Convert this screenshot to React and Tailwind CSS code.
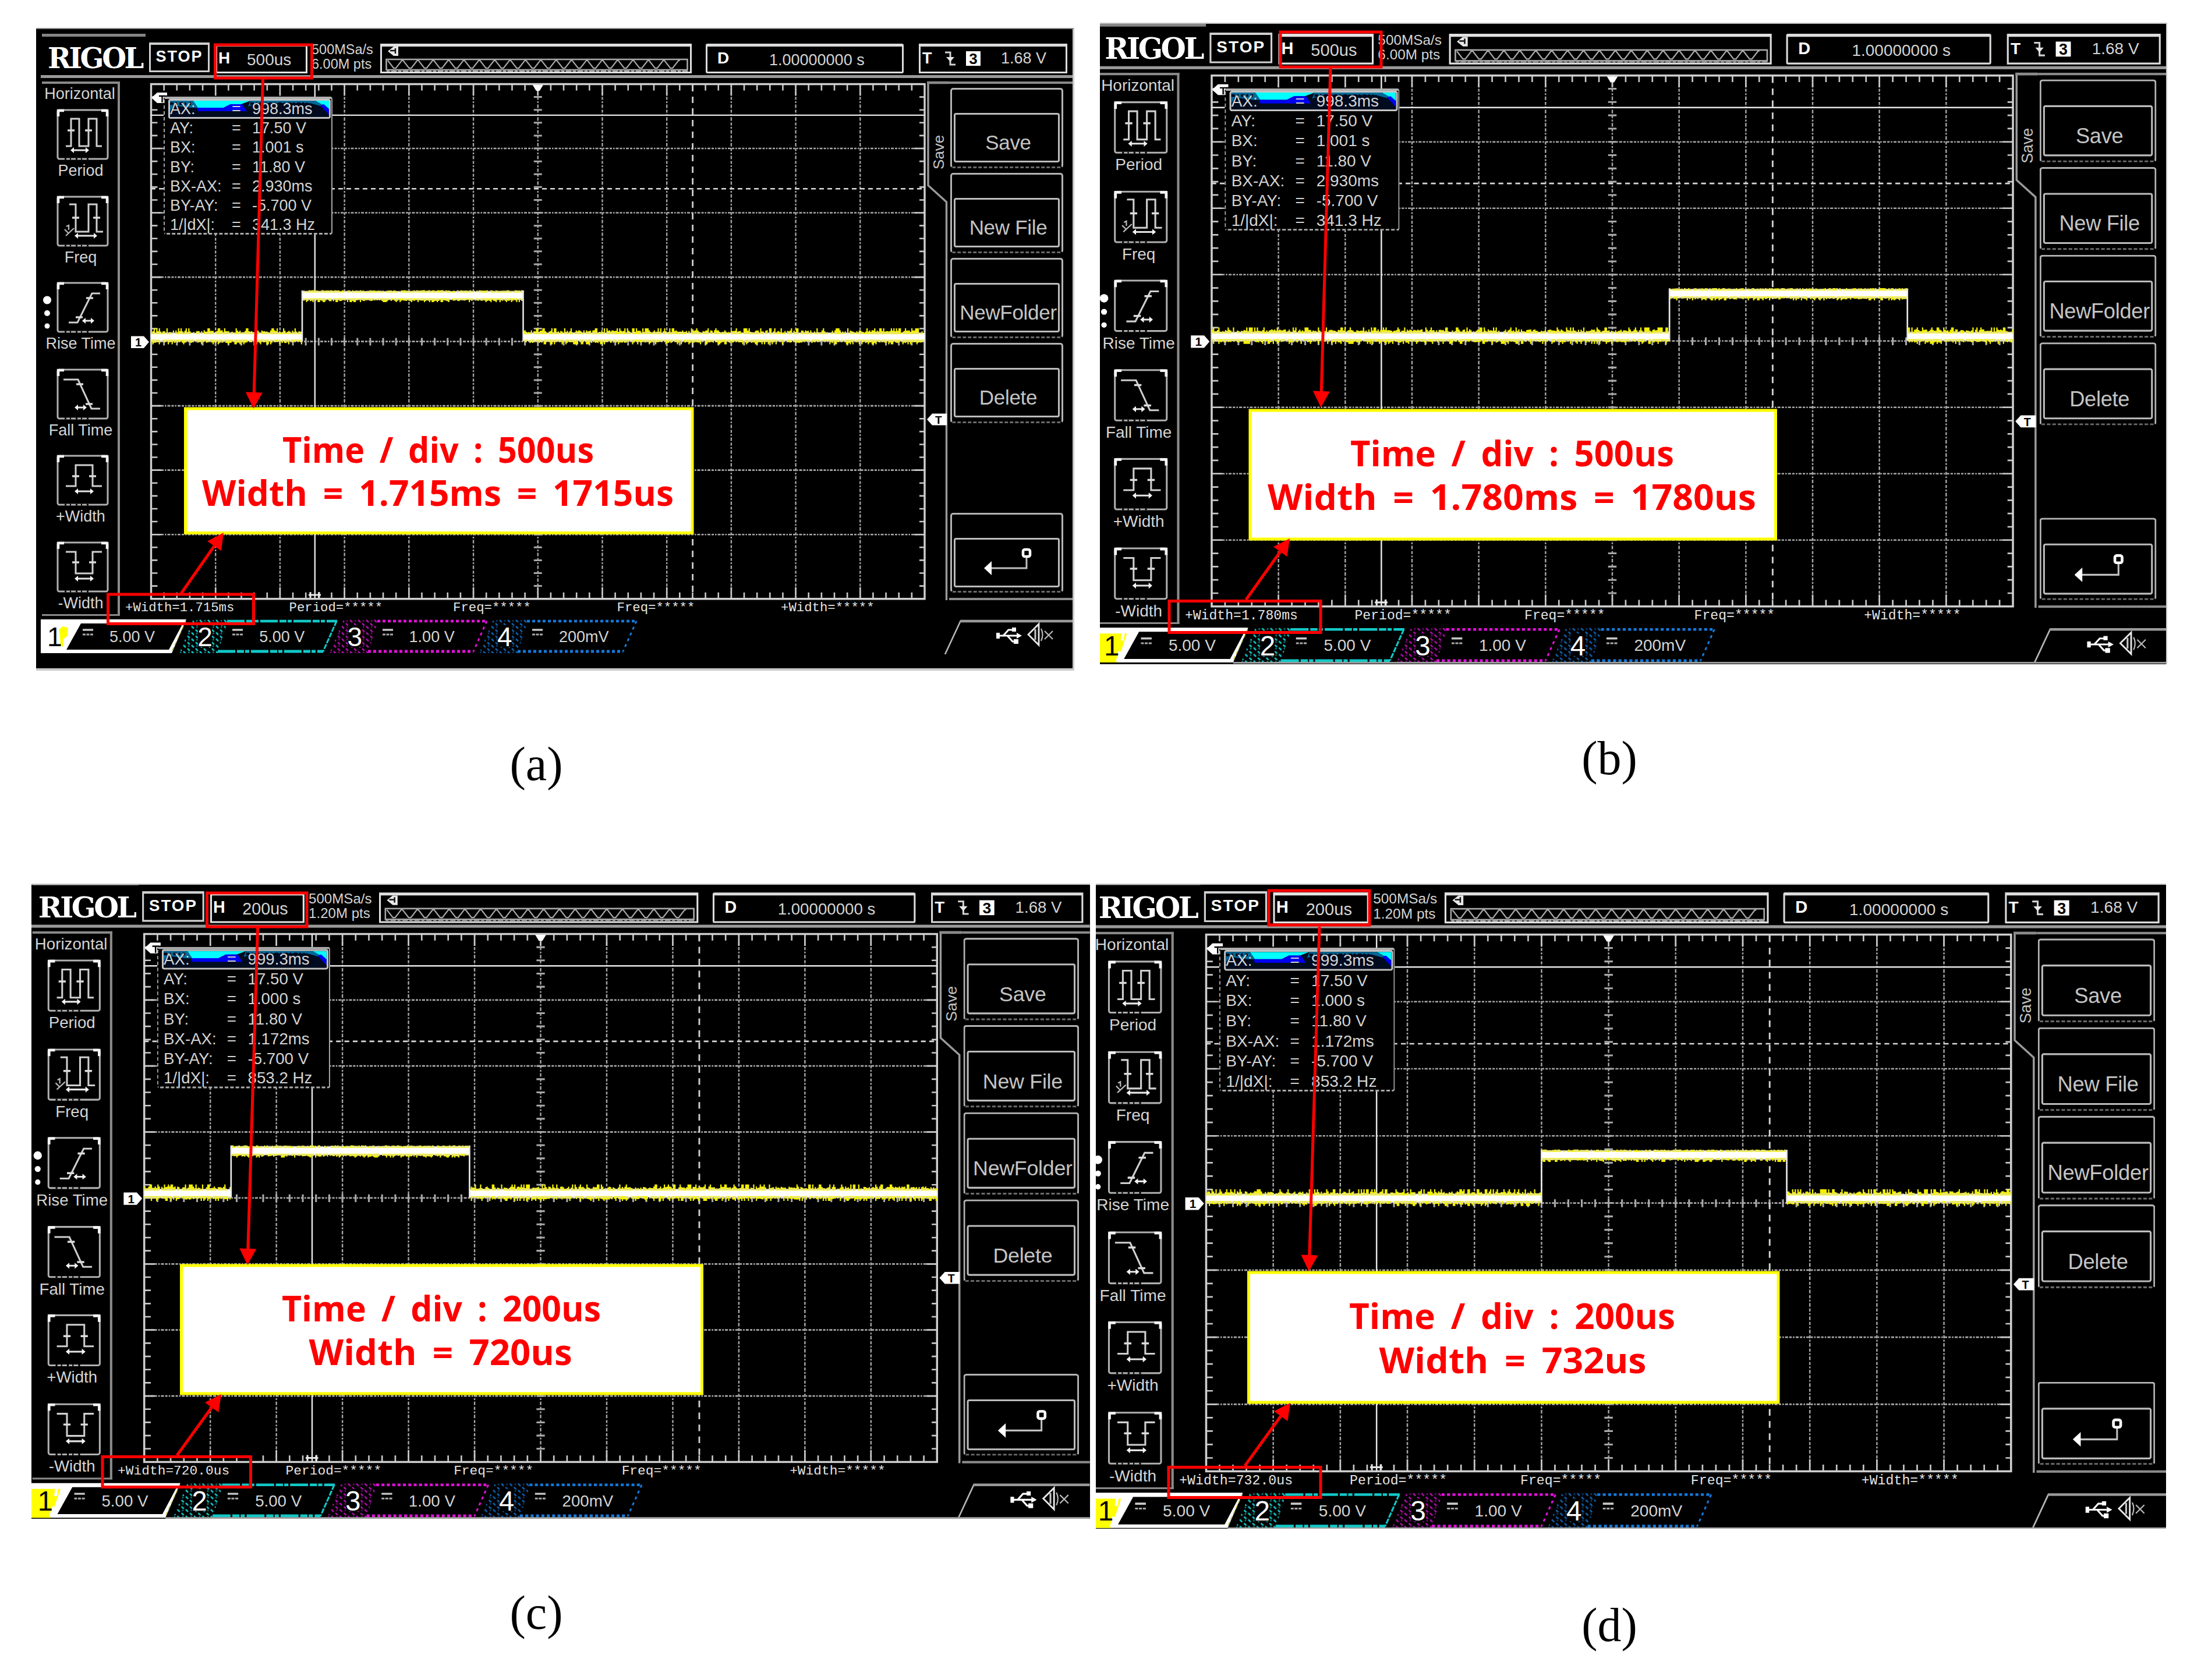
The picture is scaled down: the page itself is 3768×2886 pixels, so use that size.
const scopes = [
  {
    id: 'a',
    frame: 'ml-[62px] mt-[48px] w-[1783px] h-[1104px]',
    edge: 'border-t-2 border-t-[#8a8a8a] border-r-3 border-r-[#c8c8c8] border-b-4 border-b-[#c8c8c8]',
    caption: 'mt-[113px] pr-[3px]',
    origin: [62, 48],
    size: [1783, 1104],
    shift: [8, 8],
    scale: [1, 1],
    timebase: '500us',
    points: '6.00M pts',
    readout: ['998.3ms', '17.50 V', '1.001 s', '11.80 V', '2.930ms', '-5.700 V', '341.3 Hz'],
    measured: '1.715ms',
    pulse: [519, 898.5],
    noise: 11,
    yellowTab: false,
    notes: {
      top: [369.5, 77, 166, 57],
      topArrow: [451.5, 136, 435.5, 702],
      box: [318.5, 702, 870.5, 213.5],
      lines: [
        ['Time / div : 500us', 485, 794.6, 535],
        ['Width = 1.715ms = 1715us', 347, 868.6, 810],
      ],
      bottom: [185.5, 1021, 250, 50.5],
      bottomArrow: [311, 1019.5, 384, 915],
    },
  },
  {
    id: 'b',
    frame: 'ml-[44px] mt-[39px] w-[1833px] h-[1102px]',
    edge: 'border-t-2 border-t-[#c0c0c0] border-r-2 border-r-[#c8c8c8]',
    caption: 'mt-[114px] pr-[39px]',
    origin: [1889, 39],
    size: [1833, 1102],
    shift: [-4.3, -0.5],
    scale: [1.0358, 1.0315],
    timebase: '500us',
    points: '6.00M pts',
    readout: ['998.3ms', '17.50 V', '1.001 s', '11.80 V', '2.930ms', '-5.700 V', '341.3 Hz'],
    measured: '1.780ms',
    pulse: [1018.5, 1413],
    noise: 23,
    yellowTab: true,
    notes: {
      top: [2199, 55, 173, 60],
      topArrow: [2285, 117, 2268.5, 700],
      box: [2147, 705, 902.5, 221],
      lines: [
        ['Time / div : 500us', 2319, 800.5, 556],
        ['Width = 1.780ms = 1780us', 2177, 876.4, 839],
      ],
      bottom: [2008, 1032.5, 260, 54],
      bottomArrow: [2140, 1030, 2215, 925],
    },
  },
  {
    id: 'c',
    frame: 'ml-[54px] mt-0 w-[1818px] h-[1091px]',
    edge: 'border-t-2 border-t-[#c0c0c0]',
    caption: 'mt-[114px] pr-[30px]',
    origin: [54, 1518],
    size: [1818, 1091],
    shift: [-0.5, -4.3],
    scale: [1.0249, 1.0258],
    timebase: '200us',
    points: '1.20M pts',
    readout: ['999.3ms', '17.50 V', '1.000 s', '11.80 V', '1.172ms', '-5.700 V', '853.2 Hz'],
    measured: '720.0us',
    pulse: [405, 804.6],
    noise: 37,
    yellowTab: true,
    notes: {
      top: [355.5, 1534, 171.5, 58],
      topArrow: [442.6, 1594, 425, 2173],
      box: [311.5, 2174, 894, 220],
      lines: [
        ['Time / div : 200us', 484, 2269.5, 548],
        ['Width = 720us', 530.6, 2344.5, 452],
      ],
      bottom: [176, 2502.5, 254.5, 52],
      bottomArrow: [304, 2500, 380, 2395],
    },
  },
  {
    id: 'd',
    frame: 'ml-[10px] mt-0 w-[1838px] h-[1108px]',
    edge: 'border-t-2 border-t-[#c0c0c0]',
    caption: 'mt-[118px] pr-[64px]',
    origin: [1882, 1518],
    size: [1838, 1108],
    shift: [-7.7, -4.7],
    scale: [1.0405, 1.0428],
    timebase: '200us',
    points: '1.20M pts',
    readout: ['999.3ms', '17.50 V', '1.000 s', '11.80 V', '1.172ms', '-5.700 V', '853.2 Hz'],
    measured: '732.0us',
    pulse: [813, 1217.8],
    noise: 53,
    yellowTab: true,
    notes: {
      top: [2179, 1530, 173, 59],
      topArrow: [2266, 1592, 2248, 2184],
      box: [2144.5, 2186, 909.5, 223],
      lines: [
        ['Time / div : 200us', 2317, 2283, 560],
        ['Width = 732us', 2368.5, 2359, 459],
      ],
      bottom: [2007, 2520.5, 261, 52],
      bottomArrow: [2138, 2518, 2216, 2410],
    },
  },
];

const readoutLabels = ['AX:', 'AY:', 'BX:', 'BY:', 'BX-AX:', 'BY-AY:', '1/|dX|:'];

// Plot area in screen units
const X0 = 259.5;
const X1 = 1588;
const Y0 = 144.5;
const Y1 = 1028.7;
const DX = (X1 - X0) / 12;
const DY = (Y1 - Y0) / 8;

const sideItems = [
  { name: 'Period', d: 'M16 64H25V17H39V64H55V17H69V64H78', ticks: [[25, 37], [55, 37]], arrow: [26, 54, 71], label: 'Period' },
  { name: 'Freq', d: 'M22 15H33V62H55V15H69V62H80', ticks: [[33, 38], [69, 38]], arrow: [33, 68, 69], label: 'Freq' },
  { name: 'Rise', d: 'M21 70H36L61 20H75', ticks: [[57, 28], [39, 61]], arrow: [46, 63, 67], label: 'Rise Time' },
  { name: 'Fall', d: 'M12 19H37L60 69H75', ticks: [[40, 27], [56, 61]], arrow: [33, 50, 67], label: 'Fall Time' },
  { name: 'Width', d: 'M16 54H33V18H62V54H78', ticks: [[33, 37], [62, 37]], arrow: [33, 62, 63], label: '+Width' },
  { name: 'NegWidth', d: 'M16 18H33V55H62V18H78', ticks: [[33, 36], [62, 36]], arrow: [33, 62, 64], label: '-Width' },
];

function makeRandom(seed) {
  let s = seed * 7919;
  return () => {
    s = (s * 1103515245 + 12345) % 2147483648;
    return s / 2147483648;
  };
}

// Ragged edge of short vertical strokes above or below a trace
function fringe(from, to, y, dir, max, rand) {
  let d = '';
  for (let x = from + 1; x < to; x += 2.2) {
    const r = rand();
    if (r < 0.1) continue;
    const len = r > 0.8 ? max : max * 0.6 * r + 2;
    d += `M${x.toFixed(1)} ${y}v${(dir * len).toFixed(1)}`;
  }
  return d;
}

function Trace({ from, to, y, height, above, below, rand }) {
  return (
    <g>
      <rect x={from} y={y} width={to - from} height={height} fill="#fff" />
      <path d={fringe(from, to, y + 2, -1, above + 2, rand)} stroke="#f4f000" strokeWidth="2.2" />
      <path d={fringe(from, to, y + height - 2, 1, below + 2, rand)} stroke="#f4f000" strokeWidth="2.2" />
      <path d={fringe(from, to, y + 1, -1, above * 0.8, rand)} stroke="#ddd" strokeWidth="1.5" strokeDasharray="2 9" />
      <path d={fringe(from, to, y + height - 1, 1, below, rand)} stroke="#ddd" strokeWidth="1.5" strokeDasharray="2 7" />
    </g>
  );
}

function Plot({ pulse, noise }) {
  const rand = makeRandom(noise);
  const cx = X0 + DX * 6;
  const cy = Y0 + DY * 4;
  const cols = Array.from({ length: 11 }, (_, i) => X0 + DX * (i + 1));
  const rows = Array.from({ length: 7 }, (_, i) => Y0 + DY * (i + 1));
  let edge = '';
  let axis = '';
  for (let i = 1; i < 60; i++) {
    const x = X0 + (DX / 5) * i;
    const len = i % 5 === 0 ? 20 : 11;
    edge += `M${x} ${Y0}v${len}M${x} ${Y1}v${-len}`;
    axis += `M${x} ${cy - 6}v13`;
  }
  for (let i = 1; i < 40; i++) {
    const y = Y0 + (DY / 5) * i;
    edge += `M${X0} ${y}h${i % 5 === 0 ? 18 : 11}M${X1} ${y}h${i % 5 === 0 ? -18 : -9}`;
    axis += `M${cx - 7} ${y}h14`;
  }
  return (
    <svg className="block h-[897px] w-[1424px]" viewBox="206 134 1424 897" fill="none">
      {cols.map((x) => (
        <path key={x} d={`M${x} ${Y0}V${Y1}`} stroke="#a4a4a4" strokeWidth="2.4" strokeDasharray="5 2.5 3 2.5 6 3" />
      ))}
      {rows.map((y) => (
        <path key={y} d={`M${X0} ${y}H${X1}`} stroke="#a8a8a8" strokeWidth="2.6" strokeDasharray="4 2 2.5 2 5 2" />
      ))}
      <path d={edge} stroke="#c8c8c8" strokeWidth="2.6" />
      <path d={axis} stroke="#a8a8a8" strokeWidth="3" />
      <path d={`M${X0} ${Y0}H${X1}V${Y1}H${X0}Z`} stroke="#cfcfcf" strokeWidth="3.4" />
      <path d={`M${cx - 9} 146h18l-6 10h-6z`} fill="#fff" />

      {/* Cursors */}
      <path d="M540.8 144V1028M259 197.9H1588" stroke="#e6e6e6" strokeWidth="2.4" />
      <path d="M1189.6 146V1028" stroke="#d0d0d0" strokeWidth="2.8" strokeDasharray="11 9" />
      <path d="M259 324.3H1588" stroke="#d8d8d8" strokeWidth="2.6" strokeDasharray="8 6" />
      <path d="M530 1022h21M533 1017v10M548 1017v10" stroke="#e8e8e8" strokeWidth="3" />

      {/* Channel 1 waveform */}
      <Trace from={X0} to={pulse[0]} y={572} height={13.5} above={8} below={6} rand={rand} />
      <Trace from={pulse[0]} to={pulse[1]} y={500.5} height={14} above={2} below={4.5} rand={rand} />
      <Trace from={pulse[1]} to={X1} y={572} height={13.5} above={8} below={6} rand={rand} />
      <path d={`M${pulse[0]} 499V586M${pulse[1]} 499V586`} stroke="#e8e8e8" strokeWidth="2.6" />

      {/* Level markers */}
      <path d="M225 577.5h22l9 10-9 10.5h-22z" fill="#fff" />
      <text x="232" y="595" className="fill-black font-['Liberation_Sans'] text-[20px] font-bold">1</text>
      <path d="M260 168l10-9h17v5h-4v13h-13z" fill="#fff" />
      <path d="M273 165h11M278.5 165v11" stroke="#000" strokeWidth="2.4" />

      {/* Menu tab outline */}
      <path d="M1594 141V318.6L1625.5 347V1031" stroke="#9a9a9a" strokeWidth="3.4" />
      <path d="M1592 142H1632" stroke="#8a8a8a" strokeWidth="4.5" />
      <path d="M1592 720.5l9-10h25v20h-25z" fill="#fff" />
      <text x="1606" y="728" className="fill-black font-['Liberation_Sans'] text-[19px] font-bold">T</text>
    </svg>
  );
}

function SideIcon({ item }) {
  const [a, b, y] = item.arrow;
  return (
    <svg className="h-[88px] w-[90px]" viewBox="0 0 90 88" fill="none">
      <rect x="2" y="2" width="86" height="84" rx="3" stroke="#b0b0b0" strokeWidth="3" />
      <path d="M3 13V3H13M77 3H87V13" stroke="#f4f4f4" strokeWidth="4.5" />
      <path d="M14 86H60" stroke="#000" strokeWidth="3" strokeDasharray="3 6 2 8" />
      <path d={item.d} stroke="#cfcfcf" strokeWidth="3" />
      {item.ticks.map(([tx, ty]) => (
        <path key={tx} d={`M${tx - 6} ${ty}h12`} stroke="#dcdcdc" strokeWidth="3.4" />
      ))}
      <path d={`M${a} ${y}H${b}`} stroke="#e4e4e4" strokeWidth="3" />
      <path d={`M${a - 2} ${y}l6 -5v10zM${b + 2} ${y}l-6 -5v10z`} fill="#f4f4f4" />
      {item.name === 'Freq' && <path d="M17 53l4-2v8M16 69l14-13M14 58l6 6" stroke="#b8b8b8" strokeWidth="2.2" />}
    </svg>
  );
}

function Sidebar() {
  return (
    <div className="relative mt-[6px] ml-[2px] h-[918px] w-[134px] shrink-0 border-t-4 border-r-4 border-b-3 border-[#8a8a8a] pt-[2px] text-[27px] leading-[30px]">
      <div className="mb-[11px] text-center">Horizontal</div>
      {sideItems.map((item) => (
        <div key={item.name} className="flex h-[148.6px] flex-col items-center pl-[10px]">
          <SideIcon item={item} />
          <div className="mt-[3px] mr-[7px] whitespace-nowrap">{item.label}</div>
        </div>
      ))}
      <svg className="absolute top-[360px] left-0 h-[70px] w-[20px]" viewBox="0 0 20 70">
        <ellipse cx="9" cy="11.5" rx="7" ry="7" fill="#fff" />
        <ellipse cx="9" cy="34" rx="5" ry="5" fill="#fff" />
        <ellipse cx="9" cy="56" rx="4.5" ry="4.5" fill="#fff" />
      </svg>
    </div>
  );
}

function zigzag() {
  let d = 'M2 4';
  for (let x = 2; x < 500; x += 26.4) {
    d += `L${x + 10} 17H${x + 14}L${x + 24} 4H${x + 26.4}`;
  }
  return d;
}

function Header({ timebase, points }) {
  return (
    <div className="relative flex h-[76px] border-b-5 border-[#9a9a9a] text-[27px] leading-[30px]">
      <div className="absolute top-0 left-[2px] h-[5px] w-[178px] bg-[#858585]" />
      <div className="mt-[18px] ml-[12px] w-[174px] font-['DejaVu_Serif'] text-[48px] leading-[48px] font-bold tracking-[-3.4px] text-white">
        RIGOL
      </div>
      <div className="mt-[15px] h-[51px] w-[104px] border-3 border-t-4 border-[#d0d0d0] pt-[5px] text-center text-[27px] font-bold tracking-[2px] text-white">
        STOP
      </div>
      <div className="mt-[17px] ml-[10px] flex h-[51px] w-[158px] border-3 border-t-5 border-[#e4e4e4] pt-[5px]">
        <span className="ml-[2px] w-[49px] text-[28px] font-bold text-white">H</span>
        <span className="mt-[3px] text-[28px]">{timebase}</span>
      </div>
      <div className="mt-[15px] ml-[7px] w-[110px] text-[23.5px] leading-[25px] whitespace-nowrap">
        <div>500MSa/s</div>
        <div>{points}</div>
      </div>
      <div className="mt-[17px] ml-[8px] h-[51px] w-[535px] border-3 border-t-5 border-[#e0e0e0] pl-[6px]">
        <svg className="block h-[43px] w-[522px]" viewBox="0 0 522 43" fill="none">
          <path d="M4 8l10-8h8v16h-8z" fill="#e8e8e8" />
          <path d="M8 7h9M17 3v9" stroke="#111" strokeWidth="2.4" />
          <rect x="1.5" y="22" width="517" height="18" stroke="#a8a8a8" strokeWidth="2.6" />
          <path d="M2 42H520" stroke="#9a9a9a" strokeWidth="2.4" strokeDasharray="5 3 9 3" />
          <g transform="translate(2 20)">
            <path d={zigzag()} stroke="#a8a8a8" strokeWidth="2.2" />
          </g>
        </svg>
      </div>
      <div className="mt-[17px] ml-[24px] flex h-[51px] w-[340px] rounded-[3px] border-3 border-t-5 border-[#dcdcdc] pt-[5px]">
        <span className="ml-[17px] w-[89px] text-[28px] font-bold text-white">D</span>
        <span className="mt-[3px]">1.00000000 s</span>
      </div>
      <div className="mt-[17px] ml-[26px] flex h-[51px] w-[255px] border-3 border-t-5 border-[#dcdcdc] pt-[5px]">
        <span className="ml-[3px] w-[37px] text-[27px] font-bold text-white">T</span>
        <svg className="mt-[3px] h-[25px] w-[22px]" viewBox="0 0 22 25" fill="none">
          <path d="M2 2H11V23H20" stroke="#d0d0d0" strokeWidth="3" />
          <path d="M4 10H18L11 18z" fill="#e8e8e8" />
        </svg>
        <span className="mt-[3px] ml-[16px] h-[25px] w-[25px] bg-white text-center text-[26px] leading-[26px] font-bold text-black">3</span>
        <span className="ml-[35px]">1.68 V</span>
      </div>
    </div>
  );
}

function Readout({ values }) {
  return (
    <div className="absolute top-[32px] left-[75px] h-[237px] w-[290px] rounded-[4px] border-2 border-t-4 border-b-3 border-dashed border-[#a8a8a8] border-t-[#b0b0b0] bg-black text-[27px] leading-[33.3px] [border-right-style:solid] [border-top-style:solid]">
      {values.map((value, i) => (
        <div
          key={readoutLabels[i]}
          className={
            i === 0
              ? 'relative ml-[6px] flex h-[34px] w-[279px] rounded-[4px] border-3 border-[#c4c4c4] leading-[29px]'
              : 'ml-[6px] flex h-[33.3px] w-[279px] pl-[3px]'
          }
        >
          {i === 0 && (
            <svg className="absolute inset-0 h-[28px] w-[273px]" viewBox="0 0 273 28" preserveAspectRatio="none">
              <rect width="273" height="28" fill="#010c20" />
              <path d="M0 0H44L48 12H36L6 8L0 18zM138 0H273V24L262 10L240 4H150L134 10z" fill="#006a98" />
              <path d="M40 0H138L122 6H104L92 12H48z" fill="#0ff" />
              <path d="M46 12H92L104 6H124L132 18H48z" fill="#0000f0" />
              <path d="M250 0H273V14L264 8z" fill="#0ff" />
              <path d="M258 8L273 24V14L264 6z" fill="#0000f0" />
              <path d="M0 5H36M138 5H236M4 13H34M144 12H250M134 19H256" stroke="#01081c" strokeWidth="4.5" strokeDasharray="6 3 3 4" />
            </svg>
          )}
          <span className="relative w-[106px]">{readoutLabels[i]}</span>
          <span className="relative w-[35px] tracking-tight">=</span>
          <span className="relative whitespace-nowrap">{value}</span>
        </div>
      ))}
    </div>
  );
}

function MenuButton({ children }) {
  return (
    <div className="h-[137.5px] w-[194px] rounded-[5px] border-3 border-[#b4b4b4] px-[3px] pt-[40px] [border-bottom-style:dashed] border-b-[#6a6a6a]">
      <div className="flex h-[85px] items-center justify-center rounded-[4px] border-3 border-[#bcbcbc] text-[35px] leading-[36px] whitespace-nowrap">
        <span className="pt-[17px] pl-[5px] tracking-[-0.3px]">{children}</span>
      </div>
    </div>
  );
}

function Menu() {
  return (
    <div className="relative mt-[6px] h-[891px] w-[214px] shrink-0 border-t-4 border-b-4 border-[#8a8a8a] pt-[7px] pl-[2px] text-[#c4c4c4]">
      <div className="absolute top-[103px] left-[-48px] flex h-[28px] w-[60px] -rotate-90 items-center text-[26px] leading-[28px]">Save</div>
      <div className="flex flex-col gap-[8.5px]">
        <MenuButton>Save</MenuButton>
        <MenuButton>New File</MenuButton>
        <MenuButton>NewFolder</MenuButton>
        <MenuButton>Delete</MenuButton>
      </div>
      <div className="mt-[154px]">
        <MenuButton>
          <svg className="-mt-[18px] h-[54px] w-[84px]" viewBox="0 0 84 54" fill="none">
            <path d="M8 37H73V16" stroke="#c0c0c0" strokeWidth="3" />
            <path d="M0 37L13 25V49z" fill="#fff" />
            <rect x="67" y="5" width="12" height="12" rx="3" stroke="#fff" strokeWidth="4.5" />
          </svg>
        </MenuButton>
      </div>
    </div>
  );
}

const channels = [
  { n: 1, value: '5.00 V', color: '#ffffff' },
  { n: 2, value: '5.00 V', color: '#12c8c8' },
  { n: 3, value: '1.00 V', color: '#e010d8' },
  { n: 4, value: '200mV', color: '#1478d8' },
];

function ChannelShape({ channel, yellowTab }) {
  if (channel.n === 1) {
    return (
      <svg className="absolute inset-0 h-[58px] w-[257px] overflow-visible" viewBox="0 0 257 59" preserveAspectRatio="none">
        <path d="M13 0H263L238 59H13z" fill="#fff" />
        {yellowTab && <path d="M13 10H62L46 59H13z" fill="#ffff00" />}
        {yellowTab && <path d="M56 6l-2 16M66 8l-5 18M50 40l-4 18" stroke="#fff" strokeWidth="5" />}
        <path d="M82 7H257L233 53H57z" fill="#000" />
        {!yellowTab && <path d="M44 18l7-6 9 3-1 14-7 5-1 14-4-2-1-16z" fill="#ffff00" />}
        <path d="M262 3L238 56" stroke="#c8c850" strokeWidth="1.6" strokeDasharray="6 4" />
      </svg>
    );
  }
  const dash = channel.n === 2 ? '30 3 12 2 7 3' : '5 4';
  const hatch = `hatch-${channel.n}`;
  return (
    <svg className="absolute inset-0 h-[58px] w-[257px] overflow-visible" viewBox="0 0 257 59" preserveAspectRatio="none" fill="none">
      <defs>
        <pattern id={hatch} width="14" height="11" patternUnits="userSpaceOnUse">
          <path d="M1 1l4 4M8 7l4 4" stroke={channel.color} strokeWidth="2.6" />
          <rect x="9" y="1" width="2.5" height="3" fill={channel.color} opacity="0.6" />
        </pattern>
      </defs>
      <path d="M18 0H78L60 59H-6z" fill={`url(#${hatch})`} opacity={channel.n === 2 ? 1 : 0.8} />
      <path d="M26 10H50V48H26z" fill="#000" />
      <path d="M76 3H265" stroke={channel.color} strokeWidth="4.5" strokeDasharray={dash} />
      <path d="M264 3L241 56" stroke={channel.color} strokeWidth="3" strokeDasharray={channel.n === 2 ? '9 2' : '5 6'} />
      <path d="M60 56H241" stroke={channel.color} strokeWidth="5" strokeDasharray={dash} />
    </svg>
  );
}

function ChannelBar({ yellowTab }) {
  return (
    <div className="relative -ml-[13px] flex h-[59px]">
      {channels.map((c) => (
        <div key={c.n} className="relative flex h-[58px] w-[257.3px] shrink-0">
          <ChannelShape channel={c} yellowTab={yellowTab} />
          <span
            className={
              c.n === 1
                ? 'relative ml-[24px] w-[61px] text-[46px] leading-[61px] text-black'
                : 'relative ml-[25px] w-[60px] text-[46px] leading-[61px] text-white'
            }
          >
            {c.n}
          </span>
          <svg className="relative mt-[14px] h-[18px] w-[46px]" viewBox="0 0 46 18" fill="none">
            <path d="M0 4H18" stroke="#c8c8c8" strokeWidth="3.4" />
            <path d="M0 12H18" stroke="#a8a8a8" strokeWidth="3" strokeDasharray="5 1.5" />
          </svg>
          <span className="relative mt-[15px] text-[27px] leading-[30px]">{c.value}</span>
        </div>
      ))}
      <svg className="ml-[534px] h-[60px] w-[224px] shrink-0" viewBox="1620 1069 224 60" fill="none">
        <path d="M1623 1129L1650 1071" stroke="#b8b8b8" strokeWidth="2.6" />
        <path d="M1649 1072H1844" stroke="#9a9a9a" strokeWidth="4.5" />
        {/* USB */}
        <path d="M1713 1097H1752M1723 1097l9-10h8M1730 1097l9 10h5" stroke="#fff" strokeWidth="3" />
        <rect x="1711" y="1092" width="6" height="10" fill="#fff" />
        <path d="M1755 1097l-9-5v10z" fill="#fff" />
        <rect x="1738" y="1083" width="7" height="7" fill="#fff" />
        <rect x="1741" y="1103" width="8" height="8" fill="#fff" />
        {/* Muted speaker */}
        <path d="M1766 1095l18-18v36z" stroke="#e8e8e8" strokeWidth="2.8" />
        <path d="M1778 1086v18" stroke="#c8c8c8" strokeWidth="3" />
        <path d="M1788 1085q5 10 0 21M1794 1089l14 14M1808 1089l-14 14" stroke="#b8b8b8" strokeWidth="2.2" />
      </svg>
      {yellowTab && <div className="absolute right-0 -bottom-[1px] left-[238px] h-[3px] bg-[#9a9a9a]" />}
    </div>
  );
}

function Arrow({ line }) {
  const [x1, y1, x2, y2] = line;
  const angle = Math.atan2(y2 - y1, x2 - x1);
  const bx = x2 - Math.cos(angle) * 28;
  const by = y2 - Math.sin(angle) * 28;
  const px = Math.sin(angle) * 14.5;
  const py = -Math.cos(angle) * 14.5;
  return (
    <g>
      <path d={`M${x1} ${y1}L${bx} ${by}`} stroke="#f00" strokeWidth="5" />
      <path d={`M${x2} ${y2}L${bx + px} ${by + py}L${bx - px} ${by - py}z`} fill="#f00" />
    </g>
  );
}

// Annotations sit above the figure and are not clipped by the screen
function Notes({ notes, origin, size }) {
  const [tx, ty, tw, th] = notes.top;
  const [bx, by, bw, bh] = notes.bottom;
  const [x, y, w, h] = notes.box;
  return (
    <svg
      className="pointer-events-none absolute"
      style={{ left: origin[0], top: origin[1], width: size[0], height: size[1] }}
      viewBox={`${origin[0]} ${origin[1]} ${size[0]} ${size[1]}`}
      fill="none"
    >
      <rect x={x} y={y} width={w} height={h} fill="#fff" stroke="#ff0" strokeWidth="5" />
      <rect x={tx} y={ty} width={tw} height={th} stroke="#f00" strokeWidth="5" />
      <rect x={bx} y={by} width={bw} height={bh} stroke="#f00" strokeWidth="5" />
      <Arrow line={notes.topArrow} />
      <Arrow line={notes.bottomArrow} />
      {notes.lines.map(([label, lx, ly, lw]) => (
        <text
          key={label}
          x={lx}
          y={ly}
          textLength={lw}
          lengthAdjust="spacingAndGlyphs"
          className="fill-[#ff0000] font-['Open_Sans'] text-[60px] font-bold [word-spacing:11px]"
        >
          {label}
        </text>
      ))}
    </svg>
  );
}

function Scope({ scope }) {
  const { shift, scale } = scope;
  const results = [`+Width=${scope.measured}`, 'Period=*****', 'Freq=*****', 'Freq=*****', '+Width=*****'];
  return (
    <figure className="shrink-0">
      <div className={`relative overflow-hidden bg-black ${scope.frame} ${scope.edge}`}>
        <div
          className="flex h-[1066px] w-[1774px] origin-top-left flex-col font-['Liberation_Sans',sans-serif] text-[#d4d4d4]"
          style={{ transform: `translate(${shift[0]}px, ${shift[1]}px) scale(${scale[0]}, ${scale[1]})` }}
        >
          <Header timebase={scope.timebase} points={scope.points} />
          <div className="flex h-[930px]">
            <Sidebar />
            <div className="relative w-[1424px] shrink-0">
              <Plot pulse={scope.pulse} noise={scope.noise} />
              <Readout values={scope.readout} />
              <div className="mt-[1px] flex pl-[9px] font-['Liberation_Mono',monospace] text-[22.3px] leading-[24px] text-[#e4e4e4]">
                {results.map((text, i) => (
                  <span key={i} className="w-[281.5px] whitespace-nowrap">{text}</span>
                ))}
              </div>
            </div>
            <Menu />
          </div>
          <ChannelBar yellowTab={scope.yellowTab} />
        </div>
      </div>
      <figcaption className={`text-center font-['Liberation_Serif',serif] text-[82px] leading-[96px] text-black ${scope.caption}`}>
        ({scope.id})
      </figcaption>
      <Notes notes={scope.notes} origin={scope.origin} size={scope.size} />
    </figure>
  );
}

export default function App() {
  return (
    <main className="relative h-[2886px] w-[3768px] overflow-hidden bg-white">
      <div className="flex h-[1518px] items-start">
        <Scope scope={scopes[0]} />
        <Scope scope={scopes[1]} />
      </div>
      <div className="flex items-start">
        <Scope scope={scopes[2]} />
        <Scope scope={scopes[3]} />
      </div>
    </main>
  );
}
